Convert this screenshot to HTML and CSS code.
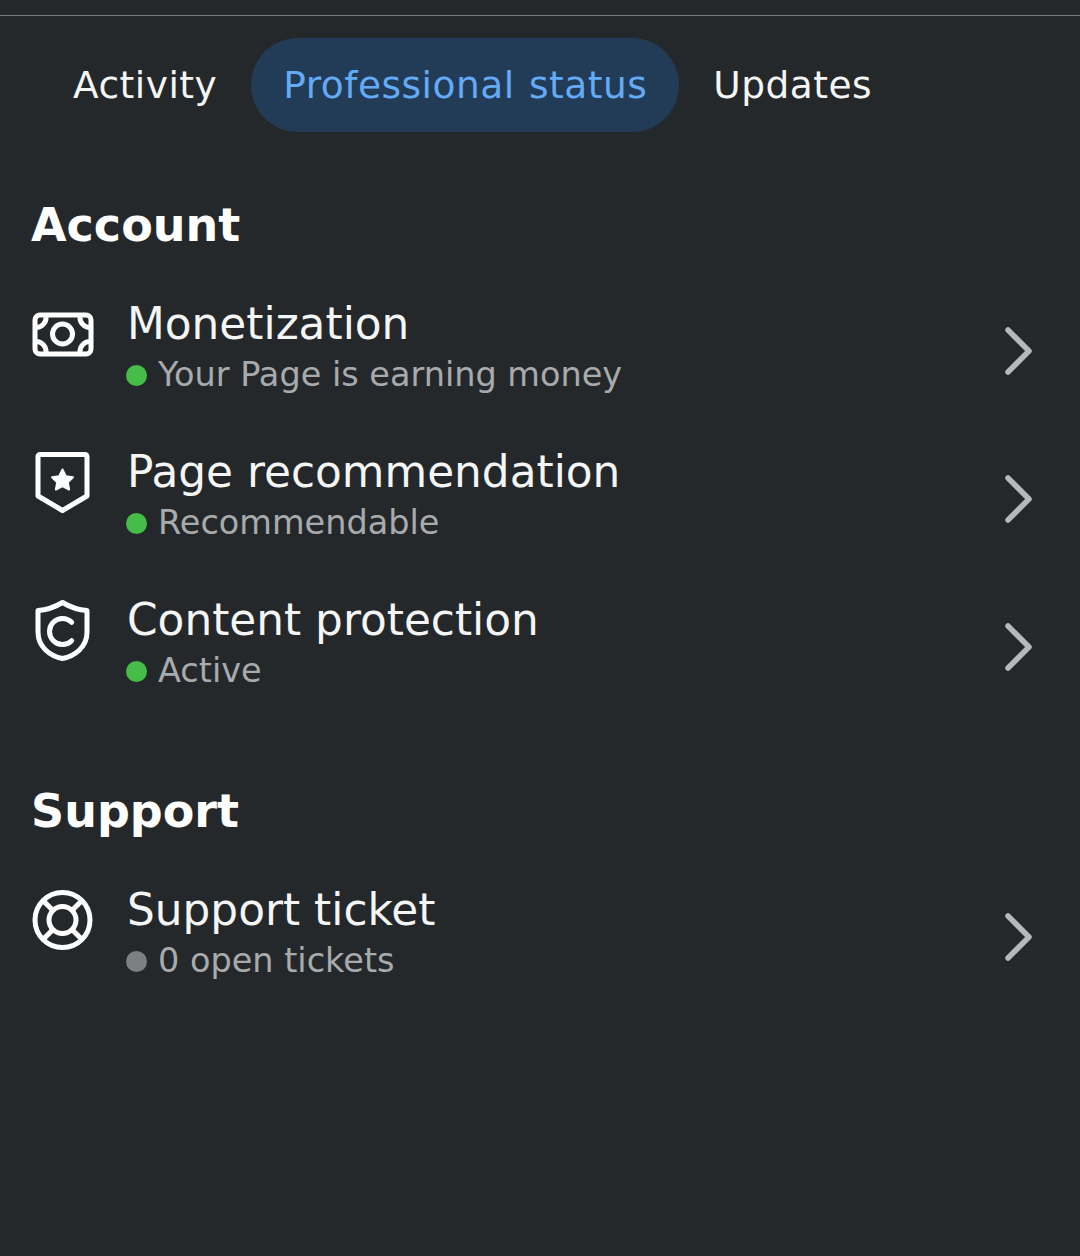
FILE: index.html
```html
<!DOCTYPE html>
<html lang="en">
<head>
<meta charset="utf-8">
<title>Professional dashboard</title>
<link rel="stylesheet" href="styles.css">
</head>
<body>
<div class="topbar"></div>
<nav class="tabs">
  <a class="tab">Activity</a>
  <a class="tab active">Professional status</a>
  <a class="tab">Updates</a>
</nav>
<section class="section account">
  <h2 class="heading">Account</h2>
  <div class="row">
    <svg class="icon" viewBox="0 0 62 62" fill="none" stroke="#fff" stroke-width="5">
      <rect x="3" y="12" width="56" height="39" rx="5"/>
      <circle cx="30.500" cy="31" r="10"/>
      <path d="M4 24.500a10 10 0 0 0 10-10.500M58 24.500a10 10 0 0 1-10-10.500M4 38.500a10 10 0 0 1 10 10.500M58 38.500a10 10 0 0 0-10 10.500"/>
    </svg>
    <div class="text">
      <div class="title">Monetization</div>
      <div class="status"><span class="dot green"></span>Your Page is earning money</div>
    </div>
    <svg class="chevron" viewBox="0 0 30 50" fill="none"><path d="M4 4l21 21L4 46"/></svg>
  </div>
  <div class="row">
    <svg class="icon" viewBox="0 0 62 62" fill="none" stroke="#fff" stroke-width="5" stroke-linejoin="round">
      <path d="M8 3.500h45a2 2 0 0 1 2 2V45L30.500 59.500 6 45V5.500a2 2 0 0 1 2-2z"/>
      <path d="M30.500 18.500l3.300 6.700 7.200 1-5.200 5.100 1.300 7.200-6.600-3.500-6.600 3.500 1.300-7.200-5.200-5.100 7.200-1z" fill="#fff" stroke-width="2"/>
    </svg>
    <div class="text">
      <div class="title">Page recommendation</div>
      <div class="status"><span class="dot green"></span>Recommendable</div>
    </div>
    <svg class="chevron" viewBox="0 0 30 50" fill="none"><path d="M4 4l21 21L4 46"/></svg>
  </div>
  <div class="row">
    <svg class="icon" viewBox="0 0 62 62" fill="none" stroke="#fff" stroke-width="5" stroke-linejoin="round">
      <path d="M30.500 3.500C38 8 47 11 55 11.500V33C55 48 43 57 30.500 59.500 18 57 6 48 6 33V11.500C14 11 23 8 30.500 3.500z"/>
      <path d="M39.700 23.300A13 13 0 1 0 39.700 41.700" stroke-linecap="round"/>
    </svg>
    <div class="text">
      <div class="title">Content protection</div>
      <div class="status"><span class="dot green"></span>Active</div>
    </div>
    <svg class="chevron" viewBox="0 0 30 50" fill="none"><path d="M4 4l21 21L4 46"/></svg>
  </div>
</section>
<section class="section support">
  <h2 class="heading">Support</h2>
  <div class="row">
    <svg class="icon" viewBox="0 0 62 62" fill="none" stroke="#fff" stroke-width="5">
      <circle cx="30.500" cy="31" r="27.500"/>
      <circle cx="30.500" cy="31" r="13.500"/>
      <path d="M10.500 11 21 21.500M50.500 11 40 21.500M10.500 51 21 40.500M50.500 51 40 40.500"/>
    </svg>
    <div class="text">
      <div class="title">Support ticket</div>
      <div class="status"><span class="dot grey"></span>0 open tickets</div>
    </div>
    <svg class="chevron" viewBox="0 0 30 50" fill="none"><path d="M4 4l21 21L4 46"/></svg>
  </div>
</section>
</body>
</html>
```
FILE: styles.css
```css
* { box-sizing: border-box; }
html, body { margin: 0; padding: 0; }
body {
  width: 1080px;
  height: 1256px;
  overflow: hidden;
  background: #25282a;
  font-family: "DejaVu Sans", "Noto Sans", sans-serif;
  color: #fff;
}
.topbar {
  height: 16px;
  border-bottom: 1px solid #77797a;
}
.tabs {
  display: flex;
  gap: 2px;
  padding: 22px 0 0 41px;
}
.tab {
  display: flex;
  align-items: center;
  height: 94px;
  padding: 0 32px;
  border-radius: 47px;
  font-size: 37.5px;
  letter-spacing: 0.5px;
  word-spacing: 2px;
  color: #f4f5f5;
}
.tab.active {
  background: #223c58;
  color: #64aaf5;
}
.section { padding: 0 32px; }
.account { margin-top: 62px; }
.support { margin-top: 61px; }
.heading {
  margin: 0 0 19px -1px;
  font-size: 46px;
  line-height: 62px;
  font-weight: 700;
}
.row {
  display: flex;
  align-items: center;
  height: 148px;
}
.icon {
  width: 62px;
  height: 62px;
  flex: none;
  align-self: flex-start;
  margin: 28px 33px 0 0;
}
.text { flex: 1; min-width: 0; }
.title {
  font-size: 43.8px;
  line-height: 52px;
  color: #f4f5f5;
}
.status {
  display: flex;
  align-items: center;
  font-size: 33.5px;
  line-height: 50px;
  color: #a8abad;
}
.dot {
  width: 21px;
  height: 21px;
  border-radius: 50%;
  margin: 0 11px 0 -1px;
  flex: none;
}
.green { background: #45bd48; }
.grey { background: #7d8083; }
.chevron {
  width: 30px;
  height: 50px;
  flex: none;
  margin: 4px 14px 0 0;
}
.chevron path {
  stroke: #b6b9bb;
  stroke-width: 5.5;
  stroke-linecap: round;
  stroke-linejoin: round;
}
```
